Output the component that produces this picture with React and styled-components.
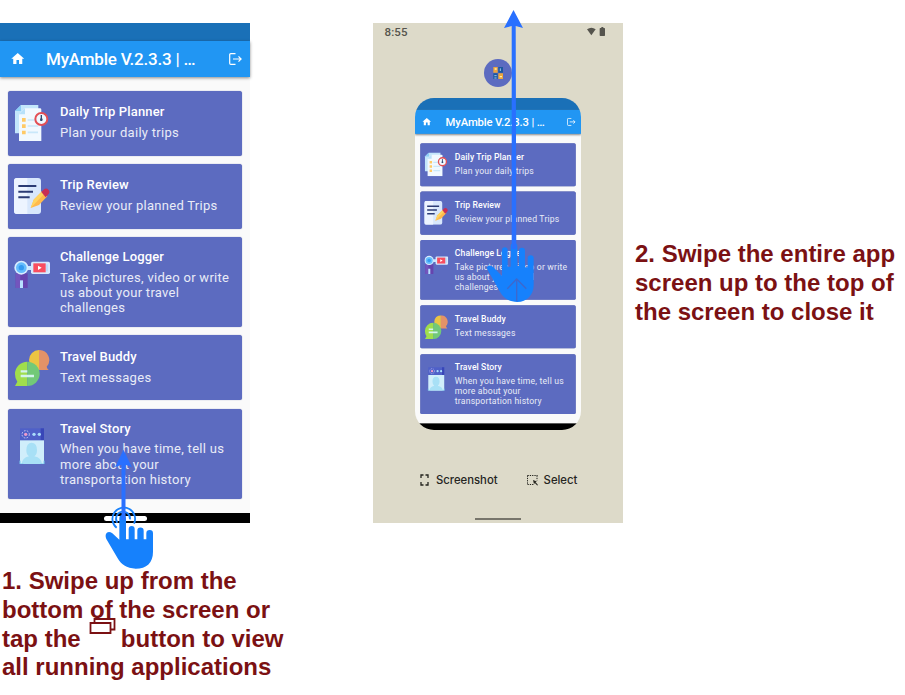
import React from "react";
import styled, { createGlobalStyle } from "styled-components";
import { MdHome } from "react-icons/md";

const GlobalStyle = createGlobalStyle`
  * { box-sizing: border-box; }
  body { margin: 0; background: #fff; overflow: hidden; }
`;

const Page = styled.main`
  display: grid;
  grid-template-columns: 300px 250px 1fr;
  column-gap: 0;
  width: 905px;
  height: 695px;
`;

const Step = styled.section`
  position: relative;
  padding-top: 23px;
  margin-left: ${(p) => p.$offset || 0}px;
`;

const Instruction = styled.p`
  margin: ${(p) => p.$margin};
  width: ${(p) => p.$width}px;
  font: bold 24px/28.8px "Liberation Sans", Arial, sans-serif;
  color: #7b1113;
  white-space: nowrap;
`;

const InstructionLine = styled.span`
  display: block;
`;

const Overlay = styled.svg`
  position: absolute;
  left: ${(p) => p.$x}px;
  top: ${(p) => p.$y}px;
  overflow: visible;
`;

/* ---------- app screen ---------- */

const Screen = styled.div`
  display: flex;
  flex-direction: column;
  width: 250px;
  height: 500px;
  background: #fafafa;
  font-family: Roboto, sans-serif;
  color: #fff;
`;

const SystemBar = styled.div`
  flex: none;
  height: 18px;
  background: #1a70b7;
`;

const AppBar = styled.header`
  flex: none;
  display: flex;
  align-items: center;
  height: 35.5px;
  padding: 0 8.5px 0 10px;
  background: #2196f3;
  box-shadow: 0 1px 3px rgba(0, 0, 0, 0.45);
`;

const AppTitle = styled.h1`
  flex: 1;
  margin: 0 0 0 20.5px;
  font-size: 17px;
  line-height: 20px;
  font-weight: 500;
  letter-spacing: -0.21px;
  white-space: nowrap;
`;

const ExitIcon = styled.svg`
  flex: none;
  width: 13px;
  height: 12px;
`;

const CardList = styled.div`
  flex: 1;
  display: flex;
  flex-direction: column;
  gap: 8.2px;
  padding: 14px 7.7px 0 7.6px;
`;

const Card = styled.article`
  display: flex;
  align-items: flex-start;
  height: ${(p) => (p.$tall ? 90.4 : 65)}px;
  padding: ${(p) => (p.$tall ? 12.3 : 13.7)}px 4px 0 6.4px;
  border-radius: 2.5px;
  background: #5c6bc0;
  box-shadow: 0 0 1px rgba(70, 80, 150, 0.8);
`;

const CardIcon = styled.svg`
  flex: none;
  width: 36px;
  height: 36px;
  margin: ${(p) => (p.$tall ? 7.4 : 1)}px 10px 0 0;
`;

const CardText = styled.div`
  display: flex;
  flex-direction: column;
  gap: 4.5px;
  white-space: pre;
`;

const CardTitle = styled.h2`
  margin: 0;
  font-size: 13px;
  line-height: 16px;
  font-weight: 500;
  letter-spacing: 0.14px;
`;

const CardBody = styled.p`
  margin: 0;
  font-size: 13px;
  line-height: 15.4px;
  letter-spacing: 0.29px;
  color: #e9ebf7;
`;

const NavBar = styled.div`
  flex: none;
  display: flex;
  justify-content: center;
  align-items: center;
  height: 10px;
  background: #000;
`;

const HomePill = styled.span`
  width: 43px;
  height: 5px;
  border-radius: 3px;
  background: #fff;
`;

const plannerArt = (
  <>
    <path d="M63 270h52v85H45v-67z" fill="#c3e6fb" />
    <path d="M63 270v18H45z" fill="#8ccdf5" />
    <path d="M75 280h45q4 0 4 4v94H57v-80z" fill="#f1f9ff" />
    <path d="M75 280v18H57z" fill="#b7e1fa" />
    <path d="M83 315h31M83 333h31M83 352h31" stroke="#c9e8fa" strokeWidth="5" />
    <path d="M66 309h11v11H66zM66 328h11v11H66zM66 347h11v11H66z" fill="#ffca66" />
    <circle cx="124" cy="312" r="18" fill="#eff9ff" stroke="#e34f55" strokeWidth="6" />
    <path d="M124 300v18" stroke="#314b72" strokeWidth="4" />
    <circle cx="124" cy="314" r="4" fill="#314b72" />
  </>
);

const reviewArt = (
  <>
    <rect x="42" y="69" width="81" height="108" rx="9" fill="#d8e7fc" />
    <path d="M51 69h31v108H51q-9 0-9-9V78q0-9 9-9z" fill="#edf4ff" />
    <path d="M55 93h54M55 110h44M55 127h34" stroke="#2b3b74" strokeWidth="6" />
    <path d="M92 159l9-25 25-25 16 15-25 26z" fill="#ffb94d" />
    <path d="M92 159l9-25 25-25 7 7z" fill="#ffd461" />
    <path d="M124 111l9-9q7-4 13 3 5 7-1 13l-8 9z" fill="#c82e55" />
  </>
);

const loggerArt = (
  <>
    <path d="M47 355h36v44H47z" fill="#6644ae" />
    <path d="M47 355h14v44H47z" fill="#7355bd" />
    <path d="M60 376h9v23h-9z" fill="#b8e0ff" />
    <path d="M82 333h15v12H82z" fill="#c9e9ff" />
    <circle cx="64" cy="338" r="21" fill="#d7edff" />
    <circle cx="64" cy="338" r="16" fill="#65bdfd" />
    <circle cx="64" cy="338" r="8" fill="#349bf1" />
    <rect x="93" y="320" width="57" height="37" rx="5" fill="#d5eaff" />
    <rect x="100" y="325" width="37" height="27" fill="#f94e60" />
    <path d="M114 332v13l11-6.5z" fill="#fff" />
    <path d="M141 328v21" stroke="#a7cdf6" strokeWidth="3" />
  </>
);

const buddyArt = (
  <>
    <path d="M117 75a30 30 0 0 0 0 60z" fill="#ecc443" />
    <path d="M117 75a30 30 0 0 1 23 50q1 5 6 10h-29z" fill="#e39268" />
    <path d="M82 110v73H45l7-13q-7-8-7-23a37 37 0 0 1 37-37z" fill="#a0de4c" />
    <path d="M82 110a37 36.5 0 0 1 0 73z" fill="#72c978" />
    <path d="M62 139h20M62 153h40" stroke="#d4f4ed" strokeWidth="7" />
  </>
);

const storyArt = (
  <>
    <path d="M60 310h72v37H60z" fill="#4f60c8" />
    <path d="M122 310h10v37h-10z" fill="#3846b8" />
    <circle cx="77" cy="328" r="11" fill="none" stroke="#c9c7f3" strokeWidth="3" strokeDasharray="5 4" />
    <circle cx="77" cy="328" r="5" fill="#ee9bcb" />
    <circle cx="102" cy="328" r="5" fill="#a9dcfb" />
    <circle cx="118" cy="328" r="5" fill="#a9dcfb" />
    <path d="M60 346h72v71H60z" fill="#d0eefb" />
    <path d="M65 417q1-18 22-23-8-5-8-18 0-23 16-23t16 23q0 13-8 18 22 5 23 23z" fill="#a8e0f6" />
    <path d="M60 407v10h10M132 407v10h-10" fill="none" stroke="#7acdf0" strokeWidth="3" />
  </>
);

const CARDS = [
  { title: "Daily Trip Planner", body: "Plan your daily trips", box: "42 270 108 108", art: plannerArt },
  { title: "Trip Review", body: "Review your planned Trips", box: "42 69 108 108", art: reviewArt },
  {
    title: "Challenge Logger",
    body: "Take pictures, video or write\nus about your travel\nchallenges",
    box: "42 306 108 108",
    art: loggerArt,
    tall: true,
  },
  { title: "Travel Buddy", body: "Text messages", box: "42 75 108 108", art: buddyArt },
  {
    title: "Travel Story",
    body: "When you have time, tell us\nmore about your\ntransportation history",
    box: "42 309 108 108",
    art: storyArt,
    tall: true,
  },
];

function AppScreen({ pill }) {
  return (
    <Screen>
      <SystemBar />
      <AppBar>
        <MdHome size={15.5} />
        <AppTitle>MyAmble V.2.3.3 | …</AppTitle>
        <ExitIcon viewBox="0 0 13 12" fill="none" stroke="#fff" strokeWidth="1.2">
          <path d="M6.500.7H1.800Q.7.700.7 1.800v8.400q0 1.100 1.100 1.100H6.500" />
          <path d="M4 6h8M9.500 3.400L12.100 6 9.500 8.600" />
        </ExitIcon>
      </AppBar>
      <CardList>
        {CARDS.map((c) => (
          <Card key={c.title} $tall={c.tall}>
            <CardIcon viewBox={c.box} $tall={c.tall}>{c.art}</CardIcon>
            <CardText>
              <CardTitle>{c.title}</CardTitle>
              <CardBody>{c.body}</CardBody>
            </CardText>
          </Card>
        ))}
      </CardList>
      <NavBar>{pill && <HomePill />}</NavBar>
    </Screen>
  );
}

/* ---------- recent apps view ---------- */

const Recents = styled.div`
  display: flex;
  flex-direction: column;
  align-items: center;
  width: 250px;
  height: 500px;
  background: #dddac9;
`;

const StatusBar = styled.div`
  display: flex;
  align-items: center;
  justify-content: space-between;
  align-self: stretch;
  height: 18px;
  padding: 0 17px 0 11.5px;
  font: 500 11.5px/18px Roboto, sans-serif;
  letter-spacing: 0.1px;
  color: #55544d;
`;

const StatusIcons = styled.svg`
  width: 19px;
  height: 10px;
`;

const AppBadge = styled.svg`
  flex: none;
  width: 28px;
  height: 28px;
  margin-top: 17.5px;
`;

const Preview = styled.div`
  flex: none;
  width: 166px;
  height: 332px;
  margin-top: 11.5px;
  border-radius: 19px;
  overflow: hidden;
`;

const Shrink = styled.div`
  width: 250px;
  height: 500px;
  transform: scale(0.664);
  transform-origin: 0 0;
`;

const Actions = styled.div`
  display: flex;
  gap: 29px;
  align-self: stretch;
  margin: 42px 0 0 47px;
`;

const Action = styled.div`
  display: flex;
  align-items: center;
  gap: ${(p) => p.$gap}px;
  font: 500 11.3px/16px Inter, "Open Sans", sans-serif;
  color: #25251f;
`;

const Handle = styled.span`
  width: 46px;
  height: 2px;
  margin-top: auto;
  margin-bottom: 3.5px;
  background: #77756b;
`;

const WindowsIcon = styled.svg`
  display: inline-block;
  width: 27px;
  height: 18px;
  margin: 0 4.5px 0 2px;
  vertical-align: 4px;
  transform: translateY(-7.5px);
`;

export default function App() {
  return (
    <Page>
      <GlobalStyle />
      <Step>
        <AppScreen pill />
        <Instruction $margin="44px 0 0 2px" $width={290}>
          <InstructionLine>1. Swipe up from the</InstructionLine>
          <InstructionLine>bottom of the screen or</InstructionLine>
          <InstructionLine>
            tap the{" "}
            <WindowsIcon viewBox="0 0 27 18" fill="none" stroke="#7b1113" strokeWidth="1.8">
              <path d="M5.5 5V1.5h20V12H22" />
              <path d="M1.5 5.5h20V15.5h-20z" />
            </WindowsIcon>
            button to view
          </InstructionLine>
          <InstructionLine>all running applications</InstructionLine>
        </Instruction>
        <Overlay $x={80} $y={440} width="110" height="135" viewBox="0 0 330 405">
          <g fill="none" stroke="#1982fb" strokeWidth="5.5">
            <path d="M110 263a34 34 0 1 1 52-12" />
            <path d="M112 248a21 21 0 1 1 38-10" />
          </g>
          <path
            fill="#1681fc"
            d="M118 235a10 10 0 0 1 20 0V298H146V267a9 9 0 0 1 18 0V298H172V272a9.5 9.5 0 0 1 19 0V298H199V280a10 10 0 0 1 20 0V335C219 368 200 386 167 386C140 386 122 372 113 355L79 297C72 280 84 270 97 280L118 299Z"
          />
          <path fill="#2970ff" d="M124.500 240V74L105 82L130.500 29L156 82L136.500 74V240Z" />
        </Overlay>
      </Step>

      <Step $offset={73}>
        <Recents>
          <StatusBar>
            8:55
            <StatusIcons viewBox="0 0 57 30" fill="#55544d">
              <path d="M0 7Q13 -3 26 7L13 25Z" />
              <path d="M43 3V0h6v3h3q2 0 2 2v20q0 2-2 2H40q-2 0-2-2V5q0-2 2-2z" />
            </StatusIcons>
          </StatusBar>
          <AppBadge viewBox="0 0 84 84">
            <circle cx="42" cy="42" r="42" fill="#5c6bc0" />
            <path d="M28 24h13v17H28zM43 43h14v17H43z" fill="#eda63d" />
            <path d="M43 24h14v17H43zM28 43h13v17H28z" fill="#1c589f" />
            <path d="M32 30h6M47 53h7" stroke="#fff0a8" strokeWidth="4" />
            <path d="M49 28v8M31 50h7M31 57h7" stroke="#9bc8ee" strokeWidth="3" />
          </AppBadge>
          <Preview>
            <Shrink>
              <AppScreen />
            </Shrink>
          </Preview>
          <Actions>
            <Action $gap={7}>
              <svg width="9" height="12" viewBox="0 0 9 12" fill="none" stroke="#25251f" strokeWidth="1.3">
                <path d="M1 4V1h2.500M5.500 1H8v3M8 8v3H5.500M3.500 11H1V8" />
              </svg>
              Screenshot
            </Action>
            <Action $gap={6}>
              <svg width="11" height="12" viewBox="0 0 11 12" fill="none" stroke="#25251f">
                <path d="M.5 1.500h10M.5 1.500v9M10 1.500v5M.5 10.500h6" strokeDasharray="1.300 1" />
                <path d="M6 6l4 1.500-1.500.6L11 11l-.8.6L7.800 9 7 10.200z" fill="#25251f" stroke="none" />
              </svg>
              Select
            </Action>
          </Actions>
          <Handle />
        </Recents>
        <Overlay $x={113} $y={230} width="60" height="75" viewBox="228 0 180 225">
          <path
            fill="#1681fc"
            d="M276 60a8.500 8.500 0 0 1 17 0V110H302V50a10 10 0 0 1 20 0V108H327V62a9 9 0 0 1 18 0V112H353V85a9 9 0 0 1 18 0V165C371 195 350 216 322 216C296 216 280 203 270 185L233 120C226 107 240 102 250 112L276 138Z"
          />
          <path d="M320 214V147M292 176L320 147L349 176" fill="none" stroke="#3e68cc" strokeWidth="4" />
        </Overlay>
        <Overlay $x={131} $y={9} width="20" height="280" viewBox="0 0 20 280">
          <path fill="#2970ff" d="M7.700 240V17L0 19L9.500 1L19 19L11.700 17L12.300 240Z" />
        </Overlay>
      </Step>

      <Step>
        <Instruction $margin="217px 0 0 85px" $width={265}>
          <InstructionLine>2. Swipe the entire app</InstructionLine>
          <InstructionLine>screen up to the top of</InstructionLine>
          <InstructionLine>the screen to close it</InstructionLine>
        </Instruction>
      </Step>
    </Page>
  );
}
